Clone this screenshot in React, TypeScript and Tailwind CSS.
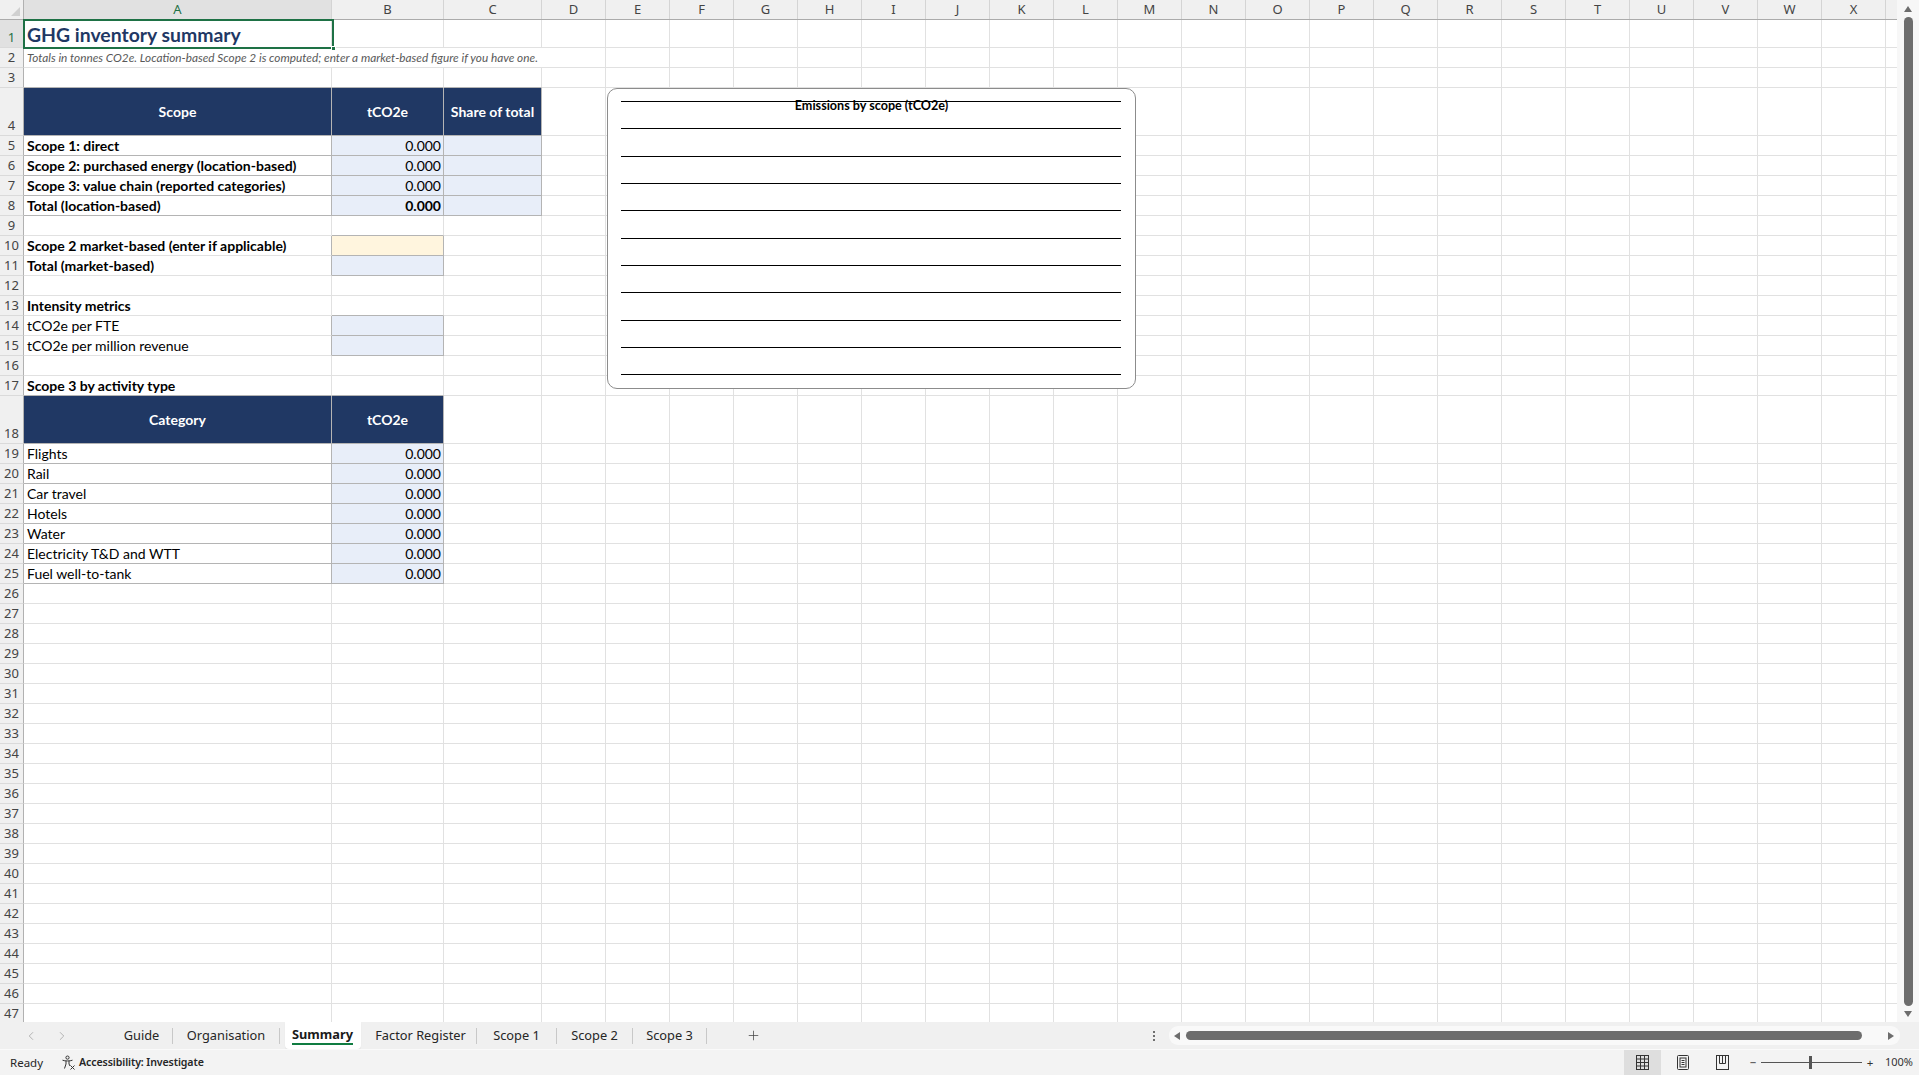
import React from 'react';
import clsx from 'clsx';
import { ChevronLeft, ChevronRight, Plus } from 'lucide-react';

type Kind = 'title' | 'sub' | 'b' | 'n' | 'h' | 'num' | 'numb';
type Fill = 'blue' | 'yellow' | 'navy';
type CellDef = { t?: string; k?: Kind; bg?: Fill; rb?: boolean; bb?: boolean };
type RowDef = { h?: 'tall' | 'title'; wide?: CellDef; cells?: CellDef[] };

const LETTERS = 'ABCDEFGHIJKLMNOPQRSTUVWX'.split('');
const COLW = ['w-[308px]', 'w-[112px]', 'w-[98px]'];

const kindCls: Record<Kind, string> = {
  title: 'items-end pl-[3px] text-[19.4px] leading-[25px] font-bold text-[#1f3864]',
  sub: 'items-end pl-[3px] pb-[2px] text-[11.8px] leading-[14px] italic text-[#595959]',
  b: 'items-end pl-[3px] pb-[1px] text-[14px] leading-[17px] font-bold text-black',
  n: 'items-end pl-[3px] pb-[1px] text-[14px] leading-[17px] text-black',
  h: 'items-center justify-center text-[14px] font-bold text-white',
  num: 'items-end justify-end pr-[2px] pb-[1px] text-[14px] leading-[17px] text-black',
  numb: 'items-end justify-end pr-[2px] pb-[1px] text-[14px] leading-[17px] font-bold text-black',
};

const fillCls: Record<Fill, string> = {
  blue: 'bg-[#e8eef9]',
  yellow: 'bg-[#fff5de]',
  navy: 'bg-[#203864]',
};

const blue = (t?: string, k: Kind = 'num'): CellDef => ({ t, k, bg: 'blue', rb: true, bb: true });
const head = (t: string): CellDef => ({ t, k: 'h', bg: 'navy', rb: true, bb: true });
const lab = (t: string, k: Kind = 'b'): CellDef => ({ t, k, rb: true, bb: true });

const rows: Record<number, RowDef> = {
  1: { h: 'title', cells: [{ t: 'GHG inventory summary', k: 'title' }] },
  2: {
    wide: {
      t: 'Totals in tonnes CO2e. Location-based Scope 2 is computed; enter a market-based figure if you have one.',
      k: 'sub',
    },
  },
  3: { cells: [{ bb: true }, { bb: true }, { bb: true }] },
  4: { h: 'tall', cells: [head('Scope'), head('tCO2e'), head('Share of total')] },
  5: { cells: [lab('Scope 1: direct'), blue('0.000'), blue()] },
  6: { cells: [lab('Scope 2: purchased energy (location-based)'), blue('0.000'), blue()] },
  7: { cells: [lab('Scope 3: value chain (reported categories)'), blue('0.000'), blue()] },
  8: { cells: [lab('Total (location-based)'), blue('0.000', 'numb'), blue()] },
  9: { cells: [{}, { bb: true }] },
  10: {
    cells: [
      { t: 'Scope 2 market-based (enter if applicable)', k: 'b', rb: true },
      { bg: 'yellow', rb: true, bb: true },
    ],
  },
  11: { cells: [{ t: 'Total (market-based)', k: 'b', rb: true }, blue()] },
  13: { cells: [{ t: 'Intensity metrics', k: 'b' }, { bb: true }] },
  14: { cells: [{ t: 'tCO2e per FTE', k: 'n', rb: true }, blue()] },
  15: { cells: [{ t: 'tCO2e per million revenue', k: 'n', rb: true }, blue()] },
  17: { cells: [{ t: 'Scope 3 by activity type', k: 'b', bb: true }, { bb: true }] },
  18: { h: 'tall', cells: [head('Category'), head('tCO2e')] },
  19: { cells: [lab('Flights', 'n'), blue('0.000')] },
  20: { cells: [lab('Rail', 'n'), blue('0.000')] },
  21: { cells: [lab('Car travel', 'n'), blue('0.000')] },
  22: { cells: [lab('Hotels', 'n'), blue('0.000')] },
  23: { cells: [lab('Water', 'n'), blue('0.000')] },
  24: { cells: [lab('Electricity T&D and WTT', 'n'), blue('0.000')] },
  25: { cells: [lab('Fuel well-to-tank', 'n'), blue('0.000')] },
};

const Cell: React.FC<{ w: string; c?: CellDef }> = ({ w, c }) => (
  <div
    className={clsx(
      'shrink-0 h-full flex border-b border-r whitespace-nowrap overflow-visible',
      w,
      c?.bg && fillCls[c.bg],
      c?.rb ? 'border-r-[#b4b4b4]' : 'border-r-[#e1e1e1]',
      c?.bb ? 'border-b-[#b4b4b4]' : 'border-b-[#e1e1e1]',
      c?.k && kindCls[c.k]
    )}
  >
    {c?.t}
  </div>
);

const Row: React.FC<{ n: number }> = ({ n }) => {
  const def = rows[n] ?? {};
  const h = def.h === 'tall' ? 'h-[48px]' : def.h === 'title' ? 'h-[28px]' : 'h-[20px]';
  const rest = LETTERS.slice(def.wide ? 4 : 3);
  return (
    <div className={clsx('flex shrink-0', h)}>
      <div
        className={clsx(
          "w-[24px] shrink-0 h-full flex items-end justify-center pb-[1px] border-r border-b border-r-[#b1b1b1] border-b-[#dadada] font-['Noto_Sans',sans-serif] text-[13px] leading-[17px]",
          n === 1 ? 'bg-[#e1e1e1] text-[#1e7145]' : 'bg-[#f0f0f0] text-[#444444]'
        )}
      >
        {n}
      </div>
      {def.wide ? (
        <Cell w="w-[582px]" c={def.wide} />
      ) : (
        COLW.map((w, i) => <Cell key={i} w={w} c={def.cells?.[i]} />)
      )}
      {rest.map((l) => (
        <Cell key={l} w="w-[64px]" />
      ))}
      <div className="flex-1 h-full border-b border-b-[#e1e1e1]" />
    </div>
  );
};

const ColumnHeader: React.FC = () => (
  <div className="flex h-[20px] shrink-0 bg-[#f0f0f0] border-b border-b-[#ababab] font-['Noto_Sans',sans-serif] text-[13px] text-[#444444]">
    <div className="w-[24px] shrink-0 h-full border-r border-r-[#b1b1b1] flex items-end justify-end p-[3px]">
      <svg width="9" height="9" viewBox="0 0 9 9">
        <polygon points="9,0 9,9 0,9" fill="#d0d0d0" />
      </svg>
    </div>
    {LETTERS.map((l, i) => (
      <div
        key={l}
        className={clsx(
          'shrink-0 h-full flex items-center justify-center border-r border-r-[#d4d4d4]',
          i < 3 ? COLW[i] : 'w-[64px]',
          i === 0 && 'bg-[#e1e1e1] text-[#1e7145]'
        )}
      >
        {l}
      </div>
    ))}
    <div className="flex-1" />
  </div>
);

const Chart: React.FC = () => {
  const ys = [12, 39, 67, 94, 121, 149, 176, 203, 231, 258, 285];
  return (
    <div className="absolute left-[607px] top-[88px] w-[529px] h-[301px] rounded-[10px] border border-[#8c8c8c] bg-white">
      <svg className="absolute left-0 top-0" width="527" height="299" viewBox="0 0 527 299">
        {ys.map((y) => (
          <line key={y} x1="13" x2="513" y1={y + 0.5} y2={y + 0.5} stroke="#000" strokeWidth="1.2" />
        ))}
      </svg>
      <div className="absolute left-0 right-0 top-[9px] text-center font-['Lato',sans-serif] text-[12.6px] leading-[16px] font-bold text-black">
        Emissions by scope (tCO2e)
      </div>
    </div>
  );
};

const Tri: React.FC<{ dir: 'up' | 'down' | 'left' | 'right' }> = ({ dir }) => {
  const pts = {
    up: '0,6 4,0 8,6',
    down: '0,0 8,0 4,6',
    left: '6,0 6,8 0,4',
    right: '0,0 0,8 6,4',
  }[dir];
  const vertical = dir === 'up' || dir === 'down';
  return (
    <svg width={vertical ? 8 : 6} height={vertical ? 6 : 8} viewBox={vertical ? '0 0 8 6' : '0 0 6 8'}>
      <polygon points={pts} fill="#6d6d6d" />
    </svg>
  );
};

const tabs: { name: string; w: string; active?: boolean }[] = [
  { name: 'Guide', w: 'w-[61px]' },
  { name: 'Organisation', w: 'w-[106px]' },
  { name: 'Summary', w: 'w-[85px]', active: true },
  { name: 'Factor Register', w: 'w-[111px]' },
  { name: 'Scope 1', w: 'w-[79px]' },
  { name: 'Scope 2', w: 'w-[75px]' },
  { name: 'Scope 3', w: 'w-[73px]' },
];

const TabBar: React.FC = () => (
  <div className="h-[27px] shrink-0 bg-[#f0f0f0] flex items-center font-['Noto_Sans',sans-serif] text-[12.8px] text-[#262626]">
    <div className="w-[111px] shrink-0 flex items-center pl-[24px] gap-[17px] text-[#9a9a9a]">
      <ChevronLeft size={14} strokeWidth={1.2} />
      <ChevronRight size={14} strokeWidth={1.2} />
    </div>
    {tabs.map((t) => (
      <React.Fragment key={t.name}>
        <div className={clsx('shrink-0 h-full flex items-center justify-center', t.w)}>
          {t.active ? (
            <div className="w-[76px] h-full flex items-center justify-center bg-white rounded-b-[4px] shadow-[0_1px_1px_rgba(0,0,0,0.08)]">
              <span className="font-bold text-[#1a1a1a] border-b-2 border-b-[#107c41] leading-[15px] pb-[1px] mt-[1px]">
                {t.name}
              </span>
            </div>
          ) : (
            t.name
          )}
        </div>
        {!t.active && <div className="w-px h-[16px] bg-[#c8c8c8] shrink-0" />}
      </React.Fragment>
    ))}
    <div className="ml-[39px] text-[#444444]">
      <Plus size={15} strokeWidth={1.2} />
    </div>
    <div className="flex-1" />
    <div className="w-[10px] flex flex-col items-center gap-[2px]">
      <div className="w-[2px] h-[2px] bg-[#444444] rounded-full" />
      <div className="w-[2px] h-[2px] bg-[#444444] rounded-full" />
      <div className="w-[2px] h-[2px] bg-[#444444] rounded-full" />
    </div>
    <div className="ml-[10px] w-[731px] h-[19px] rounded-[9px] bg-[#f9f9f9] flex items-center pl-[5px] pr-[6px]">
      <Tri dir="left" />
      <div className="ml-[6px] flex-1 h-[9px] rounded-full bg-[#6d6d6d]" />
      <div className="ml-[26px]">
        <Tri dir="right" />
      </div>
    </div>
    <div className="w-[19px]" />
  </div>
);

const StatusBar: React.FC = () => (
  <div className="h-[26px] shrink-0 bg-[#f3f3f3] border-t border-t-[#fafafa] flex items-center font-['Noto_Sans',sans-serif] text-[11.5px] text-[#262626]">
    <span className="ml-[10px]">Ready</span>
    <svg className="ml-[18px]" width="15" height="15" viewBox="0 0 15 15" fill="none" stroke="#333" strokeWidth="1">
      <circle cx="6.5" cy="2.6" r="1.6" />
      <path d="M1.5 5.2 C4 6.2 9 6.2 11.5 5.2" />
      <path d="M5 6 V9 L3.5 13.5 M8 6 V9 L9 11" />
      <path d="M9.5 10.5 L13.5 14.5 M13.5 10.5 L9.5 14.5" />
    </svg>
    <span className="ml-[3px] font-semibold text-[10.6px] tracking-[-0.1px]">Accessibility: Investigate</span>
    <div className="flex-1" />
    <div className="w-[37px] h-full bg-[#dedede] flex items-center justify-center">
      <svg width="13" height="15" viewBox="0 0 13 15" fill="none" stroke="#333" strokeWidth="1">
        <rect x="0.5" y="0.5" width="12" height="14" />
        <path d="M4.5 0.5 V14.5 M8.5 0.5 V14.5 M0.5 4 H12.5 M0.5 7.5 H12.5 M0.5 11 H12.5" />
      </svg>
    </div>
    <div className="ml-[4px] w-[37px] h-full flex items-center justify-center">
      <svg width="12" height="15" viewBox="0 0 12 15" fill="none" stroke="#333" strokeWidth="1">
        <rect x="0.5" y="0.5" width="11" height="14" rx="1" />
        <rect x="3" y="3" width="6" height="9" />
        <path d="M4.5 5.5 H7.5 M4.5 7.5 H7.5 M4.5 9.5 H7.5" />
      </svg>
    </div>
    <div className="ml-[2px] w-[37px] h-full flex items-center justify-center">
      <svg width="13" height="15" viewBox="0 0 13 15" fill="none" stroke="#333" strokeWidth="1">
        <rect x="0.5" y="0.5" width="12" height="14" />
        <path d="M3.5 0.5 V8.5 H9.5 V0.5 M6.5 0.5 V8.5" />
      </svg>
    </div>
    <span className="ml-[7px] w-[10px] text-center text-[#333]">−</span>
    <div className="ml-[3px] w-[101px] h-[1px] bg-[#555555] relative">
      <div className="absolute left-[48px] top-[-6px] w-[3px] h-[13px] bg-[#555555]" />
    </div>
    <span className="ml-[3px] w-[10px] text-center text-[#333]">+</span>
    <span className="ml-[10px] mr-[6px] text-[11px] text-[#333]">100%</span>
  </div>
);

export default function App() {
  const nums = Array.from({ length: 47 }, (_, i) => i + 1);
  return (
    <div className="w-[1919px] h-[1075px] flex flex-col overflow-hidden bg-white font-['Lato',sans-serif]">
      <div className="h-[1022px] flex shrink-0">
        <div className="relative flex-1 h-full flex flex-col overflow-hidden">
          <ColumnHeader />
          {nums.map((n) => (
            <Row key={n} n={n} />
          ))}
          <div className="absolute left-[23px] top-[19px] w-[311px] h-[30px] border-2 border-[#1e7145]" />
          <div className="absolute left-[331px] top-[46px] w-[5px] h-[5px] bg-[#1e7145] border border-white" />
          <Chart />
        </div>
        <div className="w-[22px] h-full shrink-0 bg-[#f7f7f7] flex flex-col items-center">
          <div className="mt-[6px]">
            <Tri dir="up" />
          </div>
          <div className="mt-[5px] w-[9px] flex-1 rounded-full bg-[#6d6d6d]" />
          <div className="mt-[5px] mb-[5px]">
            <Tri dir="down" />
          </div>
        </div>
      </div>
      <TabBar />
      <StatusBar />
    </div>
  );
}
